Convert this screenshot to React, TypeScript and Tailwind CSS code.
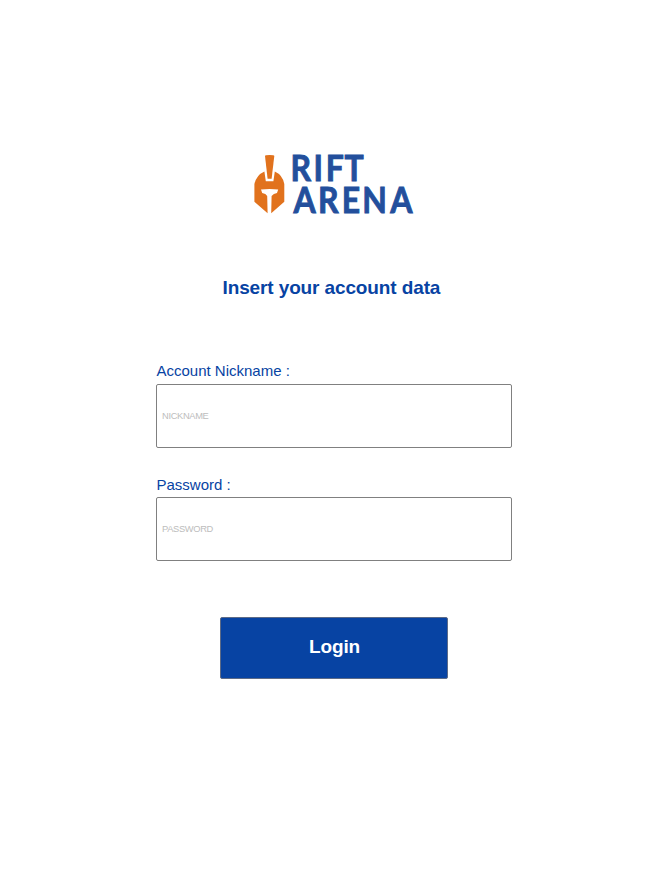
import React from "react";

function Logo() {
  return (
    <svg viewBox="0 0 175 80" className="ml-[245px] h-[80px] w-[175px]" role="img" aria-label="Rift Arena">
      <g fill="#e1721d">
        <path d="M20 11 Q20 10 24.6 10 Q29.3 10 29.3 11 L26.6 33.8 H22.6 Z" />
        <path d="M19.4 26.6 L20.8 36.3 H28.4 L29.8 26.6 Q37.5 30 39.3 39 V56.8 L26.2 68.2 L26.6 51 Q28.5 48.6 32 48 L33.2 44.4 Q24.6 43.4 16 44.4 L17.2 48 Q20.9 48.6 22.2 51 L22.6 68.2 L9.4 56.8 V39 Q11.6 30 19.4 26.6 Z" />
      </g>
      <text
        transform="scale(0.9 1)"
        fill="#234f9c"
        stroke="#234f9c"
        strokeWidth="0.9"
        fontFamily="Lato, sans-serif"
        fontWeight="700"
        fontSize="35.5"
      >
        <tspan x="50.5 76 89.6 110.6" y="36">RIFT</tspan>
        <tspan x="53.8 81 107.6 130.3 161.4" y="68">ARENA</tspan>
      </text>
    </svg>
  );
}

function Field({ label, placeholder, type, labelClass }: { label: string; placeholder: string; type: string; labelClass: string }) {
  return (
    <label className="block w-[356px]">
      <span className={`block h-[24px] pl-[0.5px] text-[15px] ${labelClass}`}>{label}</span>
      <input
        type={type}
        placeholder={placeholder}
        className="block h-[64px] w-[356px] rounded-[2px] border border-[#808080] bg-white px-[5px] text-[9.33px] tracking-[-0.35px] placeholder:text-[#bdbdbd] placeholder:opacity-100"
      />
    </label>
  );
}

export default function App() {
  return (
    <main className="min-h-[893px] w-[669px] bg-white pt-[145px] font-['Liberation_Sans',Arial,sans-serif] text-[#0743a3]">
      <Logo />
      <h1 className="ml-[222.5px] mt-[51px] whitespace-nowrap text-[19px] font-bold leading-[24px] tracking-[-0.12px]">Insert your account data</h1>
      <form className="ml-[156px] mt-[60px] flex flex-col gap-[25px]">
        <Field label="Account Nickname :" placeholder="NICKNAME" type="text" labelClass="leading-[22px]" />
        <Field label="Password :" placeholder="PASSWORD" type="password" labelClass="leading-[24px]" />
        <button type="button" className="ml-[64px] mt-[31px] h-[62px] w-[228px] rounded-[2px] border border-[#5d6b87] bg-[#0743a3] pb-[1px] pl-[1px] text-[19px] font-bold tracking-[-0.1px] text-white">
          Login
        </button>
      </form>
    </main>
  );
}
